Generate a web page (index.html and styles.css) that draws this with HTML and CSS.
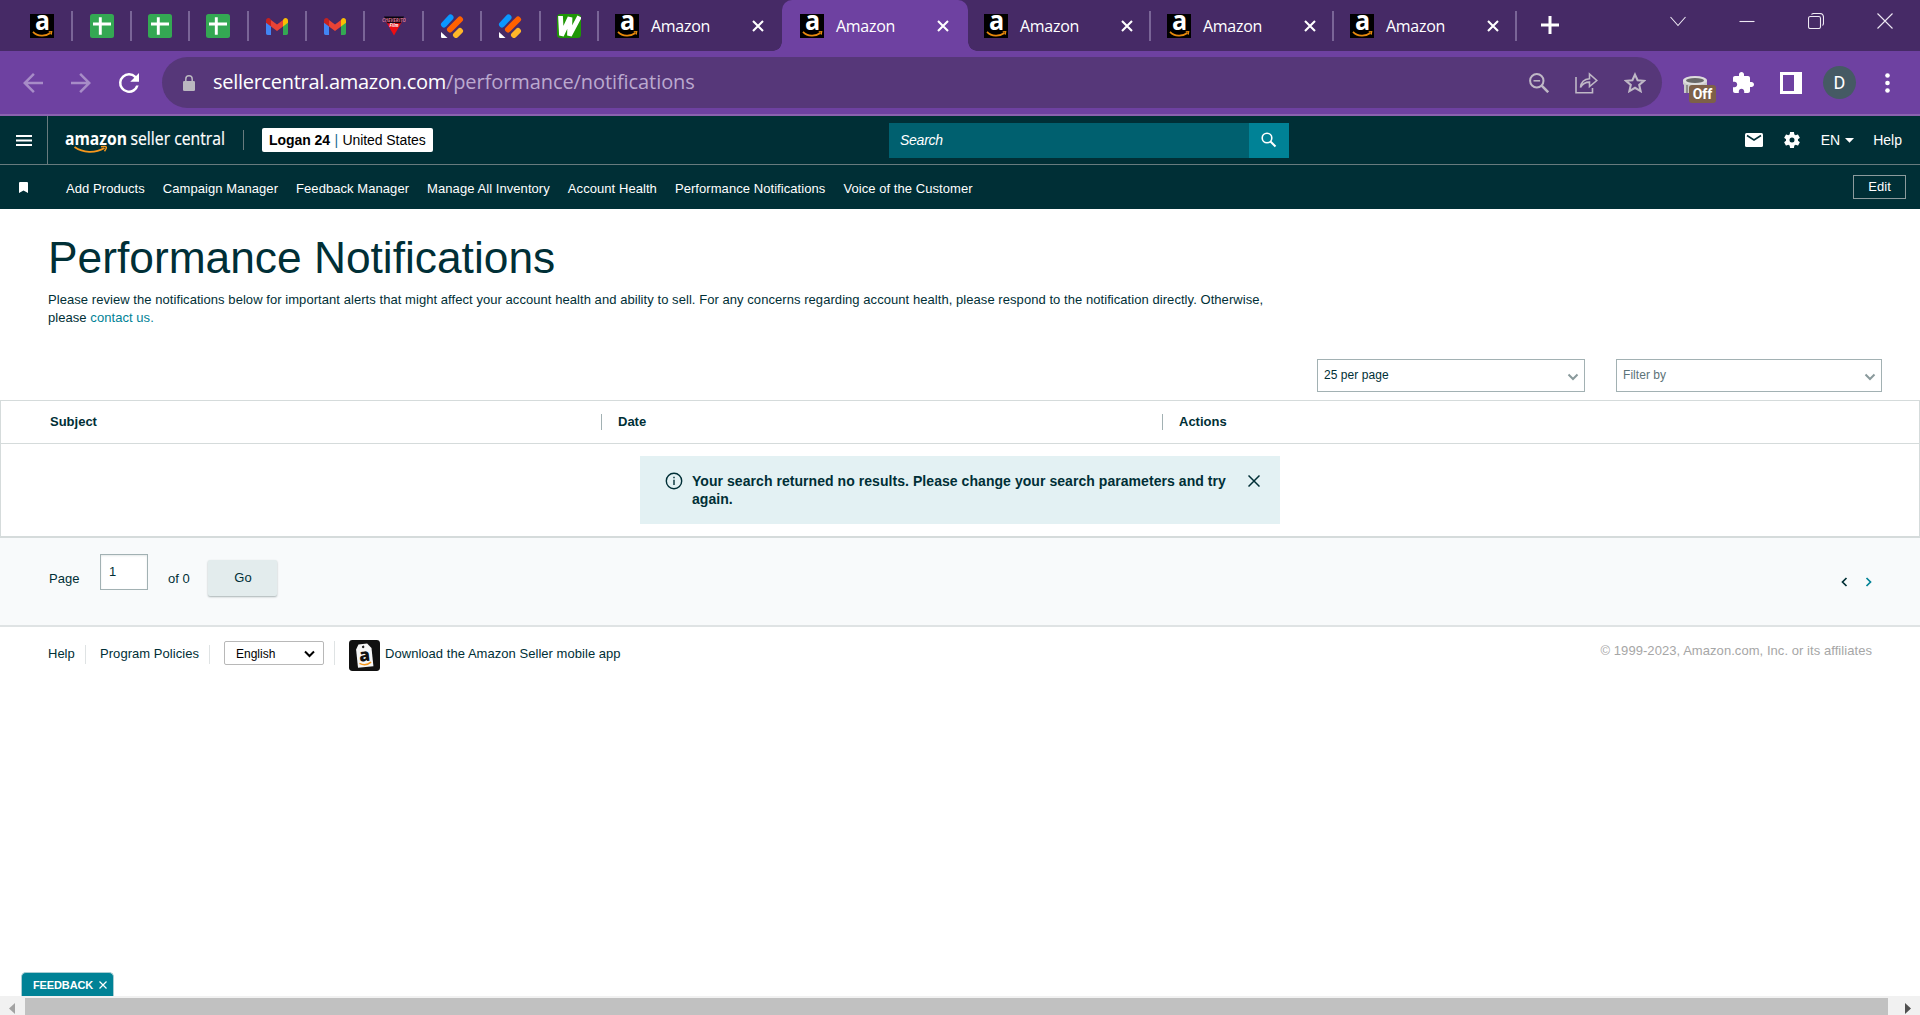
FILE: index.html
```
<!DOCTYPE html>
<html lang="en">
<head>
<meta charset="utf-8">
<title>Amazon</title>
<link rel="stylesheet" href="styles.css">
</head>
<body>
<svg class="sprite" width="0" height="0">
  <defs>
    <symbol id="amazon" viewBox="0 0 24 24">
      <rect width="24" height="24" fill="#000"/>
      <text x="5" y="16.200" font-family="Open Sans, sans-serif" font-weight="700" font-size="26" fill="#fff" textLength="15" lengthAdjust="spacingAndGlyphs">a</text>
      <path d="M3 17.800C7.500 22.600 15.500 22.600 20.500 19" fill="none" stroke="#e8890c" stroke-width="1.700"/>
      <path d="M18.700 17.800l3-.2-.5 3" fill="none" stroke="#e8890c" stroke-width="1.200"/>
    </symbol>
    <symbol id="sheet" viewBox="0 0 24 24">
      <rect width="24" height="24" rx="2.500" fill="#34a853"/>
      <path d="M3 10h18M10.300 3.300v17.500" stroke="#fff" stroke-width="2.900"/>
    </symbol>
    <symbol id="gmail" viewBox="0 0 22 17">
      <path d="M0 3v12.300C0 16.200.7 17 1.600 17H5V7L2 3z" fill="#4285f4"/>
      <path d="M22 3v12.300c0 .9-.7 1.700-1.600 1.700H17V7l3-4z" fill="#34a853"/>
      <path d="M17 1.900V8.500l5-3.800V2.500C22 .4 19.700-.7 18 .6z" fill="#fbbc04"/>
      <path d="M5 8.500V1.900l6 4.500 6-4.500v6.600L11 13z" fill="#ea4335"/>
      <path d="M0 2.500v2.200l5 3.800V1.900L4 .6C2.300-.7 0 .4 0 2.500z" fill="#c5221f"/>
    </symbol>
    <symbol id="chevere" viewBox="0 0 24 24">
      <path d="M2 2.500h20l-1.500 3h-17z" fill="#08040c"/>
      <path d="M4.200 8h15.600L12 21.500z" fill="#ee0d12"/>
      <path d="M3 5h18l-2.400 4.200H5.400z" fill="#170713"/>
      <text x="0" y="7.800" font-family="Open Sans, sans-serif" font-weight="700" font-style="italic" font-size="6" fill="#d0708c" textLength="24" lengthAdjust="spacingAndGlyphs">CHEVERITO</text>
      <text x="7.500" y="13" font-family="Open Sans, sans-serif" font-weight="700" font-style="italic" font-size="5" fill="#fff" textLength="9" lengthAdjust="spacingAndGlyphs">Film</text>
    </symbol>
    <symbol id="pencil" viewBox="0 0 24 24">
      <g fill="none" stroke-linecap="round" stroke-width="6">
        <path d="M4 10.500L10.500 3.500" stroke="#0a97ff"/>
        <path d="M10 15.500L20 5.500" stroke="#ff6100"/>
        <path d="M16 21L20 17" stroke="#ffb629"/>
      </g>
      <path d="M1 18v4.500c0 1 .5 1.500 1.500 1.500H7.500z" fill="#fff"/>
    </symbol>
    <symbol id="w" viewBox="0 0 24 24">
      <rect width="24" height="24" rx="3.500" fill="#1f9606"/>
      <path d="M3.500 2l1 19.500L13 3.500l-.5 18L22.500 2.500" fill="none" stroke="#fff" stroke-width="4.800" stroke-linejoin="bevel"/>
    </symbol>
    <symbol id="x" viewBox="0 0 12 12"><path d="M1 1l10 10M11 1L1 11" fill="none" stroke="currentColor" stroke-width="2.100"/></symbol>
    <symbol id="back" viewBox="0 0 24 24"><path d="M20 11H7.830l5.590-5.590L12 4l-8 8 8 8 1.410-1.410L7.830 13H20v-2z"/></symbol>
    <symbol id="reload" viewBox="0 0 24 24"><path d="M17.650 6.350A7.950 7.950 0 0 0 12 4a8 8 0 1 0 7.730 10h-2.080A6 6 0 1 1 12 6c1.660 0 3.140.690 4.220 1.780L13 11h7V4l-2.350 2.350z"/></symbol>
    <symbol id="chev" viewBox="0 0 12 8"><path d="M1.500 1.500L6 6l4.500-4.500" fill="none" stroke="currentColor" stroke-width="2"/></symbol>
  </defs>
</svg>

<header class="browser">
  <div class="tabs">
    <div class="tab pinned first"><svg class="fav"><use href="#amazon"/></svg></div>
    <div class="tab pinned"><svg class="fav"><use href="#sheet"/></svg></div>
    <div class="tab pinned"><svg class="fav"><use href="#sheet"/></svg></div>
    <div class="tab pinned"><svg class="fav"><use href="#sheet"/></svg></div>
    <div class="tab pinned"><svg class="mail"><use href="#gmail"/></svg></div>
    <div class="tab pinned"><svg class="mail"><use href="#gmail"/></svg></div>
    <div class="tab pinned"><svg class="fav"><use href="#chevere"/></svg></div>
    <div class="tab pinned"><svg class="fav"><use href="#pencil"/></svg></div>
    <div class="tab pinned"><svg class="fav"><use href="#pencil"/></svg></div>
    <div class="tab pinned"><svg class="fav"><use href="#w"/></svg></div>
    <div class="tab wide before"><svg class="fav"><use href="#amazon"/></svg><span>Amazon</span><svg class="close"><use href="#x"/></svg></div>
    <div class="tab wide active"><svg class="fav"><use href="#amazon"/></svg><span>Amazon</span><svg class="close"><use href="#x"/></svg></div>
    <div class="tab wide after"><svg class="fav"><use href="#amazon"/></svg><span>Amazon</span><svg class="close"><use href="#x"/></svg></div>
    <div class="tab wide"><svg class="fav"><use href="#amazon"/></svg><span>Amazon</span><svg class="close"><use href="#x"/></svg></div>
    <div class="tab wide"><svg class="fav"><use href="#amazon"/></svg><span>Amazon</span><svg class="close"><use href="#x"/></svg></div>
    <svg class="new" viewBox="0 0 18 18"><path d="M9 0v18M0 9h18" stroke="#fff" stroke-width="3"/></svg>
    <div class="window">
      <svg width="16" height="16" viewBox="0 0 16 16"><path d="M.5 4L8 12.500 15.500 4"/></svg>
      <svg width="16" height="16" viewBox="0 0 16 16"><path d="M.5 8.500h15"/></svg>
      <svg width="16" height="16" viewBox="0 0 16 16"><rect x=".5" y="3.500" width="12" height="12" rx="1.800"/><path d="M3.500 1.500Q4 .5 6 .5h5.500q4 0 4 4V10q0 2-1 2.500"/></svg>
      <svg width="16" height="16" viewBox="0 0 16 16"><path d="M.5.5l15 15M15.500.5l-15 15"/></svg>
    </div>
  </div>
  <div class="toolbar">
    <svg class="tool dim"><use href="#back"/></svg>
    <svg class="tool dim flip"><use href="#back"/></svg>
    <svg class="tool"><use href="#reload"/></svg>
    <div class="address">
      <svg width="12" height="16" viewBox="0 0 12 16"><path d="M1.300 6h9.400Q12 6 12 7.300v7.400Q12 16 10.700 16H1.300Q0 16 0 14.700V7.300Q0 6 1.300 6z" fill="#bab7c0"/><path d="M2.800 7V4a3.200 3.200 0 0 1 6.400 0v3" fill="none" stroke="#bab7c0" stroke-width="1.500"/></svg>
      <div class="url"><b>sellercentral.amazon.com</b><span>/performance/notifications</span></div>
      <div class="actions">
        <svg width="20" height="20" viewBox="0 0 20 20"><circle cx="7.800" cy="7.800" r="6.700" stroke-width="2"/><path d="M12.700 12.700l6.500 6.500" stroke-width="2.600"/><path d="M4.500 7.800h6.600" stroke-width="1.500"/></svg>
        <svg width="23" height="22" viewBox="0 0 23 22"><path d="M1 5v15.800h16.500V16" stroke-width="1.600"/><path d="M5.500 15.500C6 10 9.500 7 14.500 6.700V2l7.300 6.500-7.300 6v-4.400c-4 0-7 1.600-9 5.400z" stroke-width="1.600"/></svg>
        <svg width="22" height="21" viewBox="0 0 22 21"><path d="M11 2.600l2.600 5.600 6.400.6-4.800 4.100 1.400 6.200-5.600-3.300-5.600 3.300 1.400-6.200L2 8.800l6.400-.6z" stroke-width="2.100"/></svg>
      </div>
    </div>
    <div class="extension">
      <svg width="24" height="17" viewBox="0 0 24 17"><path d="M0 4.500h24V10l-3 2v5H1V9L0 8z" fill="#c9c9c9"/><path d="M4 9v8" stroke="#777" stroke-width="1.500"/><ellipse cx="12" cy="4.500" rx="12" ry="4.500" fill="#ddd"/><ellipse cx="12" cy="4.500" rx="9" ry="2.500" fill="#686868"/></svg>
      <span class="off">Off</span>
    </div>
    <svg class="puzzle" width="24" height="24" viewBox="0 0 24 24"><path fill="#fff" d="M20.500 11H19V7c0-1.100-.9-2-2-2h-4V3.500C13 2.120 11.880 1 10.500 1S8 2.120 8 3.500V5H4c-1.100 0-1.990.9-1.990 2v3.800H3.500c1.490 0 2.700 1.210 2.700 2.700s-1.210 2.700-2.700 2.700H2V20c0 1.100.9 2 2 2h3.800v-1.500c0-1.490 1.210-2.700 2.700-2.700s2.700 1.210 2.700 2.700V22H17c1.100 0 2-.9 2-2v-4h1.500c1.380 0 2.500-1.120 2.500-2.500S21.880 11 20.500 11z"/></svg>
    <svg class="panel" width="22" height="22" viewBox="0 0 22 22"><path fill="#fff" fill-rule="evenodd" d="M0 0h22v22H0zM3 3v16h11V3z"/></svg>
    <div class="avatar">D</div>
    <svg class="dots" width="5" height="20" viewBox="0 0 5 20"><g fill="#fff"><circle cx="2.500" cy="2.500" r="2.300"/><circle cx="2.500" cy="10" r="2.300"/><circle cx="2.500" cy="17.500" r="2.300"/></g></svg>
  </div>
</header>

<nav class="seller">
  <div class="top">
    <div class="burger"><svg width="16" height="11" viewBox="0 0 16 11"><path d="M0 1h16M0 5.500h16M0 10h16" stroke="#fff" stroke-width="1.900"/></svg></div>
    <svg class="logo" width="164" height="38" viewBox="0 0 164 38" font-family="Open Sans, sans-serif" fill="#fff">
      <text x="0" y="24" font-weight="700" font-size="18" textLength="62" lengthAdjust="spacingAndGlyphs">amazon</text>
      <text x="65.500" y="24" font-size="18.500" textLength="94.500" lengthAdjust="spacingAndGlyphs" stroke="#fff" stroke-width=".2">seller central</text>
      <path d="M9.500 26C18 32 30 32.500 39.500 27" fill="none" stroke="#f7981d" stroke-width="1.800"/><path d="M36 25.800q4.800-1 5.300.2t-1.800 4.200" fill="none" stroke="#f7981d" stroke-width="1.400"/>
    </svg>
    <div class="account"><b>Logan 24</b><i>|</i>United States</div>
    <div class="search"><em>Search</em><div class="go"><svg width="16" height="16" viewBox="0 0 16 16"><circle cx="6" cy="6" r="4.800" fill="none" stroke="#fff" stroke-width="1.600"/><path d="M9.500 9.500l5 5" stroke="#fff" stroke-width="2"/></svg></div></div>
    <div class="right">
      <svg width="18" height="14" viewBox="0 0 18 14"><rect width="18" height="14" rx="1.500" fill="#fff"/><path d="M2 2.500l7 4.500 7-4.500" fill="none" stroke="#002f36" stroke-width="1.500"/></svg>
      <svg class="gear" width="20" height="20" viewBox="0 0 24 24"><path fill="#fff" fill-rule="evenodd" d="M19.140 12.940c.04-.3.060-.610.060-.940 0-.320-.020-.640-.070-.940l2.030-1.580c.180-.140.230-.410.120-.610l-1.920-3.320c-.120-.220-.370-.290-.590-.220l-2.390.960c-.5-.380-1.030-.7-1.620-.940l-.360-2.540c-.040-.240-.240-.410-.480-.410h-3.840c-.240 0-.430.170-.470.410l-.360 2.540c-.590.240-1.130.570-1.620.940l-2.390-.960c-.220-.080-.470 0-.590.220L2.740 8.870c-.120.210-.080.470.120.610l2.030 1.580c-.050.3-.090.630-.090.940s.020.640.070.940l-2.030 1.580c-.180.140-.230.410-.120.610l1.920 3.320c.120.220.370.290.590.220l2.390-.960c.5.380 1.030.7 1.620.940l.360 2.540c.050.240.240.410.480.410h3.840c.240 0 .440-.170.470-.410l.360-2.540c.590-.240 1.130-.560 1.620-.940l2.390.960c.220.080.470 0 .590-.220l1.920-3.320c.120-.220.070-.470-.120-.610zM12 15a3 3 0 1 1 0-6 3 3 0 0 1 0 6z"/></svg>
      <span class="lang">EN</span><svg class="caret" width="9" height="5" viewBox="0 0 9 5"><path d="M0 0h9L4.500 4.700z" fill="#fff"/></svg>
      <span>Help</span>
    </div>
  </div>
  <div class="sub">
    <svg class="bookmark" width="9" height="11" viewBox="0 0 9 11"><path d="M0 1q0-1 1-1h7q1 0 1 1v10L4.500 8.500 0 11z" fill="#fff"/></svg>
    <a>Add Products</a><a>Campaign Manager</a><a>Feedback Manager</a><a>Manage All Inventory</a><a>Account Health</a><a>Performance Notifications</a><a>Voice of the Customer</a>
    <div class="edit">Edit</div>
  </div>
</nav>

<main>
  <h1>Performance Notifications</h1>
  <p class="intro">Please review the notifications below for important alerts that might affect your account health and ability to sell. For any concerns regarding account health, please respond to the notification directly. Otherwise,<br>please <a>contact us.</a></p>
  <div class="filters">
    <div class="select">25 per page<svg><use href="#chev"/></svg></div>
    <div class="select muted">Filter by<svg><use href="#chev"/></svg></div>
  </div>
  <section class="table">
    <div class="head"><div>Subject</div><div>Date</div><div>Actions</div></div>
    <div class="body">
      <div class="alert">
        <svg width="18" height="18" viewBox="0 0 18 18"><circle cx="9" cy="9" r="7.700" fill="none" stroke="#002f36" stroke-width="1.400"/><path d="M9 7.800v5.200M9 4.700v1.600" stroke="#002f36" stroke-width="1.400"/></svg>
        <div class="message">Your search returned no results. Please change your search parameters and try<br>again.</div>
        <svg class="dismiss" width="12" height="12" viewBox="0 0 12 12"><path d="M.5.5l11 11M11.500.5l-11 11" stroke="#002f36" stroke-width="1.500"/></svg>
      </div>
    </div>
  </section>
  <section class="pager">
    <span class="page">Page</span><div class="number">1</div><span class="of">of 0</span><div class="button">Go</div>
    <div class="arrows"><svg width="7" height="10" viewBox="0 0 7 10"><path d="M5.500 1L1.500 5l4 4" fill="none" stroke="#002f36" stroke-width="1.700"/></svg><svg width="7" height="10" viewBox="0 0 7 10"><path d="M1.500 1l4 4-4 4" fill="none" stroke="#008296" stroke-width="1.700"/></svg></div>
  </section>
</main>

<footer>
  <a class="help">Help</a><a class="policies">Program Policies</a>
  <div class="language"><div>English<svg width="13" height="8" viewBox="0 0 12 8"><use href="#chev"/></svg></div></div>
  <svg class="app" width="31" height="31" viewBox="0 0 32 32"><rect width="32" height="32" rx="3.500" fill="#111"/><g transform="rotate(-6 16 16)"><path d="M11 4h9l4 5v19H8V9z" fill="#f7f7f7"/><circle cx="15.500" cy="7" r="1.300" fill="#222"/><text x="16" y="22" text-anchor="middle" font-family="Open Sans, sans-serif" font-weight="800" font-size="18" fill="#111">a</text><path d="M10 23.500q6 4 12 0" fill="none" stroke="#f7981d" stroke-width="1.600"/></g></svg>
  <a class="download">Download the Amazon Seller mobile app</a>
  <span class="copyright">© 1999-2023, Amazon.com, Inc. or its affiliates</span>
</footer>

<div class="feedback">FEEDBACK<svg width="8" height="8" viewBox="0 0 8 8"><path d="M.5.5l7 7M7.500.5l-7 7" stroke="#fff" stroke-width="1.200"/></svg></div>
<div class="scrollbar"><svg width="6" height="11" viewBox="0 0 6 11"><path d="M6 0v11L0 5.500z" fill="#a3a3a3"/></svg><div class="thumb"></div><svg width="6" height="11" viewBox="0 0 6 11"><path d="M0 0v11l6-5.500z" fill="#505050"/></svg></div>
</body>
</html>
```
FILE: styles.css
```
* { box-sizing: border-box; }
html, body { height: 100%; }
body {
  margin: 0;
  height: 1015px;
  overflow: hidden;
  display: flex;
  flex-direction: column;
  background: #fff;
  color: #002f36;
  font: 13px/18px "Liberation Sans", Arial, sans-serif;
}
svg { display: block; flex: none; }
.sprite { position: absolute; }

/* Browser chrome */
.browser { flex: none; font-family: "Open Sans", "Segoe UI", sans-serif; color: #fff; }
.tabs { display: flex; height: 51px; background: #462a66; padding-left: 14px; }
.tab { position: relative; display: flex; align-items: center; height: 51px; padding-top: 1px; flex: none; }
.pinned { width: 58.4px; justify-content: center; }
.pinned.first { padding-right: 3px; }
.tab::after { content: ""; position: absolute; right: -1px; top: 11px; width: 2px; height: 30px; background: #7a6597; }
.fav { width: 24px; height: 24px; }
.mail { width: 22px; height: 17px; }
.wide { width: 183px; padding-left: 17px; font-size: 16px; letter-spacing: -.25px; }
.wide span { width: 60px; margin-left: 12px; }
.close { width: 12px; height: 12px; margin-left: 41px; margin-top: -1px; }
.wide.before { width: 184px; }
.wide.active { width: 186px; padding-left: 18px; background: #6e41a1; border-radius: 10px 10px 0 0; }
.wide.after { width: 182px; padding-left: 16px; }
.before::after { display: none; }
.active::before, .active::after {
  content: "";
  position: absolute;
  top: auto;
  bottom: 0;
  width: 9px;
  height: 9px;
}
.active::before { left: -9px; background: radial-gradient(circle at 0 0, #462a66 8.500px, #6e41a1 9px); }
.active::after { right: -9px; background: radial-gradient(circle at 100% 0, #462a66 8.500px, #6e41a1 9px); }
.new { width: 18px; height: 18px; margin: 16px 0 0 25px; }
.window { display: flex; gap: 53px; margin: 13px 27px 0 auto; }
.window svg { fill: none; stroke: #eee9f3; stroke-width: 1.100; }

.toolbar { display: flex; align-items: center; height: 65px; background: #6e41a1; border-bottom: 2px solid #8b62b0; padding-left: 18px; }
.tool { width: 30px; height: 30px; margin-right: 18px; fill: #fff; }
.dim { fill: #a78cc7; }
.flip { transform: scaleX(-1); }
.address { display: flex; align-items: center; width: 1500px; height: 51px; border-radius: 26px; background: #563779; padding: 0 16px 0 21px; }
.url { margin: -1px 0 0 18px; font-size: 20px; white-space: nowrap; }
.url b { font-weight: 400; letter-spacing: -.29px; }
.url span { color: #bba9cf; letter-spacing: -.08px; }
.actions { display: flex; align-items: center; gap: 26px; margin-left: auto; }
.actions svg { fill: none; stroke: #bfb8c6; }
.extension { position: relative; margin-left: 21px; padding-top: 3px; }
.off { position: absolute; left: 6px; top: 12px; width: 27px; height: 18px; border-radius: 3px; background: #7d6048; font: bold 14px/19px Roboto, sans-serif; text-align: center; }
.puzzle { margin-left: 24px; }
.panel { margin-left: 25px; }
.avatar { width: 33px; height: 33px; margin-left: 21px; border-radius: 50%; background: #455a64; font: 18px/34px Roboto, sans-serif; text-align: center; }
.dots { margin-left: 29px; }

/* Seller Central navigation */
.seller { flex: none; height: 93px; background: #002f36; color: #fff; font-size: 14px; }
.top { display: flex; align-items: center; height: 49px; border-bottom: 1px solid #687b7e; }
.burger { width: 48px; height: 48px; padding: 19px 0 0 16px; border-right: 1px solid #687b7e; }
.logo { margin: -1px 14px 0 17px; }
.account { position: relative; width: 171px; height: 24px; margin-left: 19px; padding-left: 7px; border-radius: 2px; background: #fff; color: #000; line-height: 25px; letter-spacing: -.07px; white-space: nowrap; }
.account::before { content: ""; position: absolute; left: -19px; top: 2px; width: 1px; height: 20px; background: #687b7e; }
.account i { margin: 0 4.500px 0 4.500px; font-style: normal; color: #1c6a94; }
.search { display: flex; width: 400px; height: 35px; margin-left: 456px; background: #00606f; }
.search em { flex: 1; padding-left: 11px; line-height: 34px; letter-spacing: -.25px; }
.go { width: 40px; background: #008296; padding: 9px 0 0 12px; }
.right { display: flex; align-items: center; height: 48px; margin: 0 18px 0 auto; }
.gear { margin-left: 19px; }
.lang { margin-left: 19px; }
.caret { margin: 0 19px 0 5px; }
.sub { display: flex; align-items: center; height: 44px; padding: 2px 14px 0 19px; font-size: 13px; letter-spacing: .065px; }
.sub a { margin-right: 18px; line-height: 18px; padding-top: 1px; }
.bookmark { margin-right: 38px; margin-top: -2px; }
.edit { width: 53px; height: 24px; margin: -2px 0 0 auto; border: 1px solid #8c9b9d; text-align: center; line-height: 22px; }

/* Notifications page */
main { flex: none; }
h1 { margin: 25px 0 9px 48px; font-size: 44.300px; line-height: 48px; font-weight: 400; }
.intro { margin: 0 0 32px 48px; letter-spacing: .058px; white-space: nowrap; }
.intro a { color: #008296; }
.filters { display: flex; justify-content: flex-end; gap: 31px; padding-right: 38px; }
.select { display: flex; justify-content: space-between; width: 268px; height: 33px; padding: 0 5px 0 6px; border: 1px solid #a2b1b3; font-size: 12px; line-height: 31px; letter-spacing: .05px; }
.select.muted { width: 266px; color: #5c7378; }
.select svg { width: 12px; height: 8px; margin-top: 13px; color: #8a9a9c; }
.table { height: 138px; margin-top: 8px; border: 1px solid #d5dbdb; border-bottom: 2px solid #d5dbdb; }
.head { display: flex; align-items: center; height: 43px; border-bottom: 1px solid #d5dbdb; font-weight: bold; }
.head div { width: 561px; padding-left: 16px; height: 16px; line-height: 15px; border-left: 1px solid #a2b1b3; }
.head div:first-child { width: 600px; padding-left: 49px; border: 0; }
.body { display: flex; justify-content: center; padding-top: 12px; }
.alert { display: flex; width: 640px; height: 68px; padding: 16px 20px 0 25px; background: #e3f1f3; font-size: 14px; font-weight: bold; letter-spacing: .055px; }
.message { flex: 1; margin-left: 9px; white-space: nowrap; }
.dismiss { margin-top: 3px; }
.pager { display: flex; height: 89px; padding: 16px 48px 0; background: #f8fafb; border-bottom: 2px solid #dfe3e4; }
.page, .of { margin-top: 16px; }
.page { width: 52px; padding-left: 1px; }
.number { width: 48px; height: 36px; padding: 8px; border: 1px solid #a2b1b3; background: #fff; box-shadow: inset 0 1px 2px #e5e9e9; }
.of { width: 60px; padding-left: 20px; }
.button { width: 69px; height: 36px; margin-top: 6px; padding-left: 1px; border-radius: 2px; background: #e3eced; box-shadow: 0 1px 2px #a9b2b4; text-align: center; line-height: 35px; }
.arrows { display: flex; gap: 17px; margin: 23px 0 0 auto; }

/* Footer */
footer { display: flex; flex: none; height: 46px; padding: 14px 48px 0; align-items: flex-start; }
.help, .policies { height: 19px; margin-top: 4px; line-height: 17px; border-right: 1px solid #dfe3e4; }
.help { width: 38px; }
.policies { width: 124px; padding-left: 14px; letter-spacing: .05px; }
.language { width: 125px; height: 24px; padding-left: 14px; border-right: 1px solid #dfe3e4; }
.language div { display: flex; justify-content: space-between; align-items: center; width: 100px; height: 24px; padding: 1px 7px 0 11px; border: 1px solid #b8b8b8; border-radius: 2px; color: #000; font-size: 12px; }
.app { margin: -1px 5px 0 14px; }
.download { margin-top: 4px; letter-spacing: .04px; line-height: 17px; }
.copyright { margin: 1px 0 0 auto; color: #a6a6a6; letter-spacing: .058px; line-height: 17px; }

.feedback { display: flex; align-items: center; gap: 6px; flex: none; width: 93px; height: 24px; margin: auto 0 0 21px; padding-left: 11px; border: 1px solid #a9cdd3; border-bottom: 0; border-radius: 5px 5px 0 0; background: #008296; color: #fff; font-size: 11px; font-weight: bold; letter-spacing: -.12px; }
.scrollbar { display: flex; flex: none; align-items: flex-end; height: 19px; padding: 0 9px 0 9px; background: #f1f1f1; }
.scrollbar svg { margin-bottom: 1px; }
.thumb { flex: none; width: 1863px; height: 17px; margin: 0 17px 0 10px; background: #c1c1c1; }
```
